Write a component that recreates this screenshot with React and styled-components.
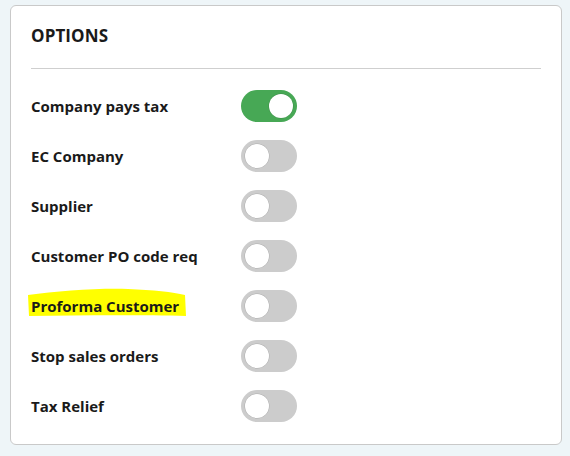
import React, { useState } from "react";
import styled, { createGlobalStyle } from "styled-components";

const Global = createGlobalStyle`
  html, body { margin: 0; padding: 0; background: #eef5f8; }
  body { font-family: "Open Sans", "Noto Sans", sans-serif; color: #1a1a1a; }
`;

const Page = styled.div`
  padding: 5px 8px 12px 10px;
`;

const Card = styled.section`
  background: #fff;
  border: 1px solid #c9c9c9;
  border-radius: 6px;
  padding: 18px 20px 13px 20px;
  width: 510px;
`;

const Title = styled.h2`
  margin: 0;
  font-size: 17px;
  font-weight: 700;
  line-height: 24px;
  letter-spacing: 0.1px;
  padding-bottom: 20px;
  border-bottom: 1px solid #cfcfcf;
`;

const List = styled.div`
  display: grid;
  grid-template-columns: 210px auto;
  grid-auto-rows: 50px;
  align-items: center;
  padding-top: 12px;
`;

const Label = styled.span`
  position: relative;
  font-size: 15px;
  font-weight: 700;
  justify-self: start;
  z-index: 0;
`;

const Mark = styled.svg`
  position: absolute;
  left: -3px;
  top: -8px;
  width: 159px;
  height: 29px;
  z-index: -1;
`;

const Track = styled.button`
  position: relative;
  width: 56px;
  height: 32px;
  border: none;
  border-radius: 16px;
  padding: 0;
  cursor: pointer;
  background: ${(p) => (p.$on ? "#47a855" : "#cccccc")};
  justify-self: start;
`;

const Knob = styled.span`
  position: absolute;
  top: 4px;
  left: ${(p) => (p.$on ? "28px" : "4px")};
  width: 24px;
  height: 24px;
  border-radius: 50%;
  background: #fff;
  box-shadow: 0 0 0 0.5px rgba(0, 0, 0, 0.15);
`;

const options = [
  { label: "Company pays tax", on: true },
  { label: "EC Company" },
  { label: "Supplier" },
  { label: "Customer PO code req" },
  { label: "Proforma Customer", highlight: true },
  { label: "Stop sales orders" },
  { label: "Tax Relief" },
];

export default function App() {
  const [state, setState] = useState(options.map((o) => !!o.on));
  return (
    <Page>
      <Global />
      <Card>
        <Title>OPTIONS</Title>
        <List>
          {options.map((o, i) => (
            <React.Fragment key={o.label}>
              <Label>
                {o.highlight && (
                  <Mark viewBox="0 0 159 29" preserveAspectRatio="none">
                    <path
                      d="M0 7 C30 3 70 0 100 1 C125 2 145 4 157 7 L158 28 C120 27 60 27 1 28 Z"
                      fill="#ffff00"
                    />
                  </Mark>
                )}
                {o.label}
              </Label>
              <Track
                $on={state[i]}
                onClick={() =>
                  setState((s) => s.map((v, j) => (j === i ? !v : v)))
                }
              >
                <Knob $on={state[i]} />
              </Track>
            </React.Fragment>
          ))}
        </List>
      </Card>
    </Page>
  );
}
